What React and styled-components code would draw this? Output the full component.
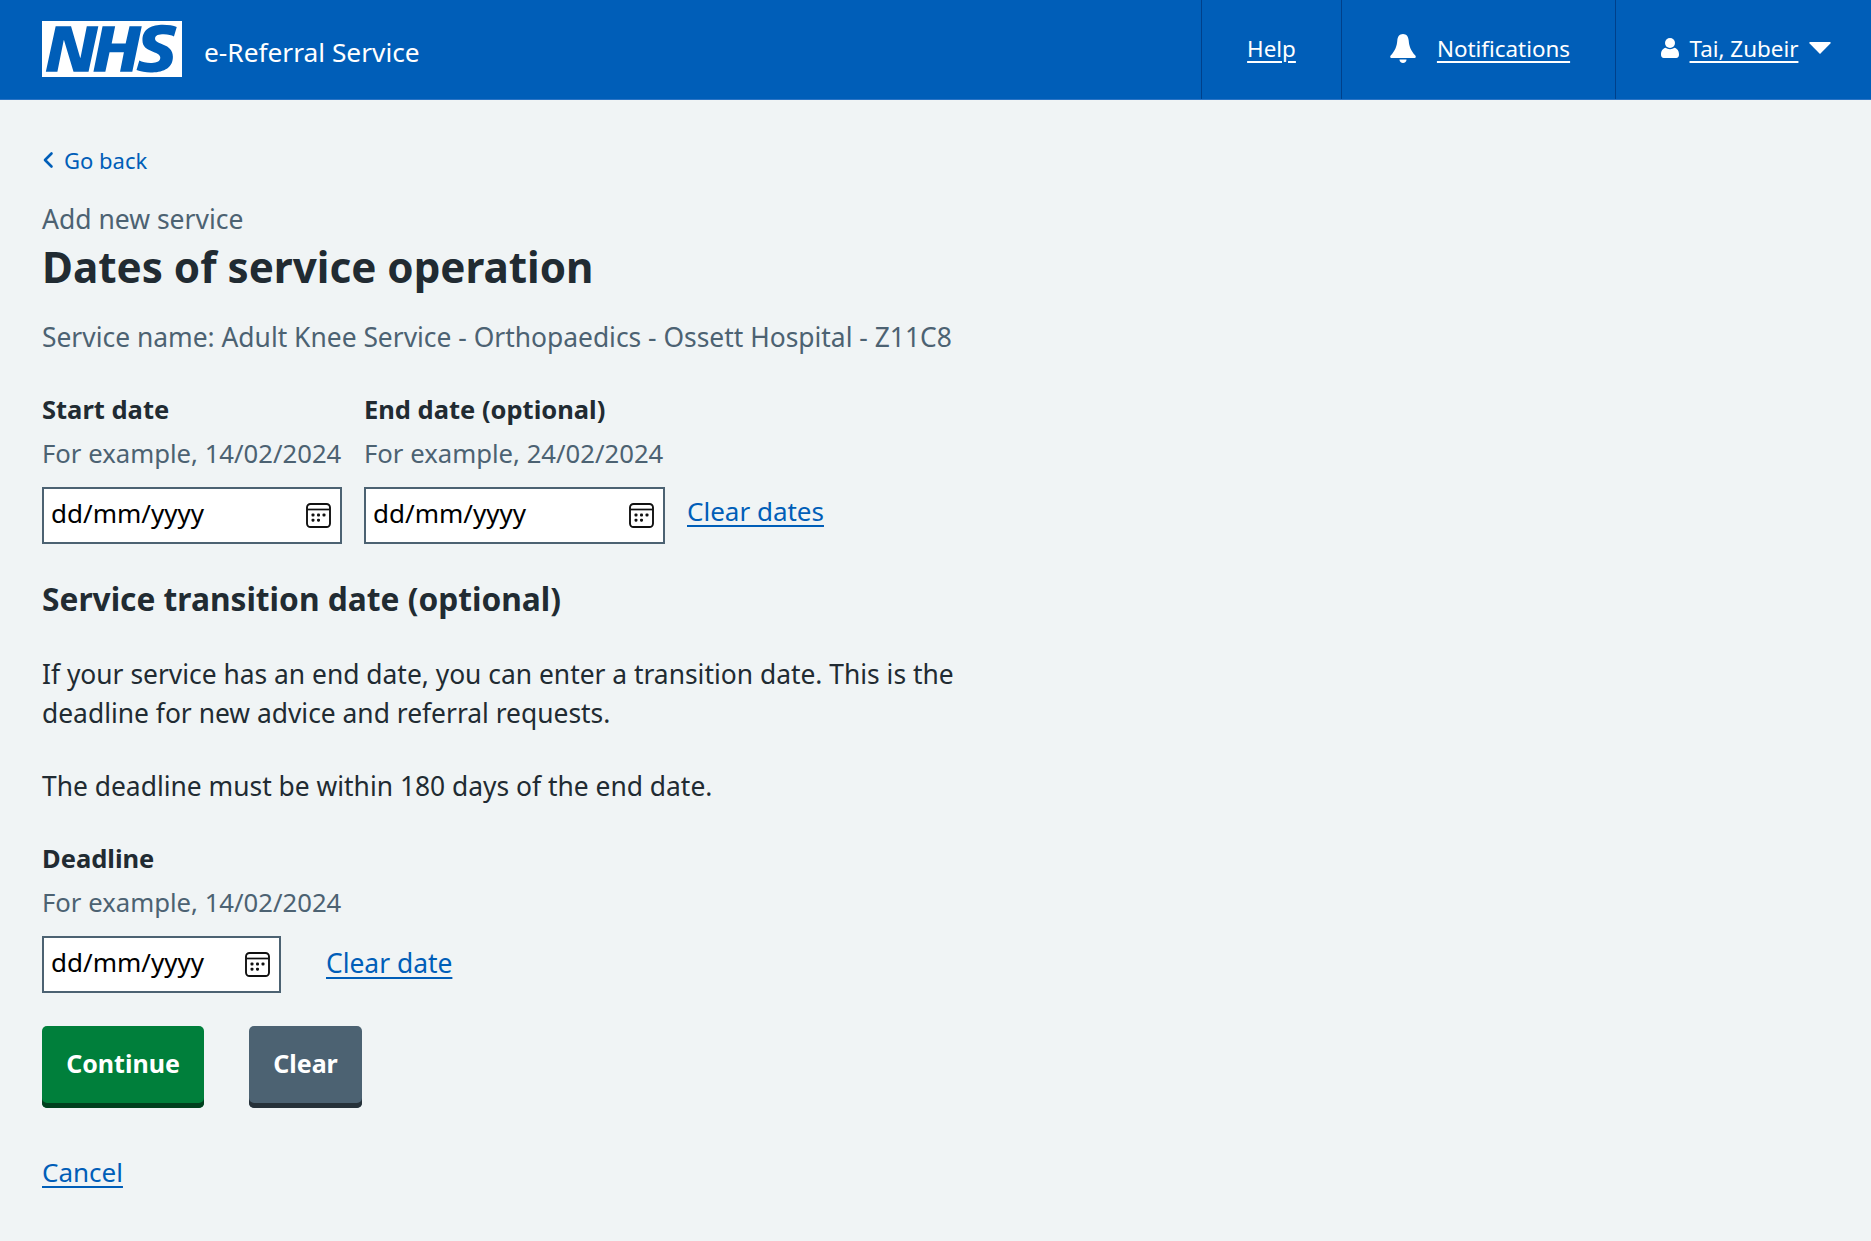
import React from 'react';
import styled, { createGlobalStyle } from 'styled-components';

const GlobalStyle = createGlobalStyle`
  html, body {
    margin: 0;
    padding: 0;
    background: #f0f4f5;
  }
  body {
    font-family: 'Noto Sans', 'Open Sans', Arial, sans-serif;
    color: #212b32;
  }
`

const Header = styled.header`
  display: flex;
  justify-content: space-between;
  height: 99px;
  background: #005eb8;
  border-bottom: 1px solid #2c74c4;
`

const Brand = styled.div`
  display: flex;
  align-items: center;
  gap: 22px;
  padding-left: 42px;
`

const Logo = styled.svg`
  display: block;
  width: 140px;
  height: 56px;
  margin-top: -2px;
`

const ServiceName = styled.span`
  color: white;
  font-size: 26.3px;
  margin-top: 5px;
`

const Nav = styled.nav`
  display: flex;
  height: 100%;
`

const NavItem = styled.div`
  display: flex;
  align-items: center;
  justify-content: center;
  width: ${props => props.width}px;
  gap: ${props => props.gap || 0}px;
  box-sizing: border-box;
  border-left: 1px solid #00408a;
  padding: 0 0 3px ${props => props.shift || 0}px;
`

const NavLink = styled.a`
  color: white;
  font-size: 22.4px;
  text-decoration: underline;
  text-underline-offset: 4px;
`

const Main = styled.main`
  padding: 45px 0 0 42px;
`

const BackLink = styled.a`
  display: flex;
  align-items: center;
  gap: 10px;
  color: #005eb8;
  font-size: 22px;
  line-height: 30px;
`

const Caption = styled.div`
  margin-top: 27px;
  font-size: 26.5px;
  line-height: 34px;
  color: #4c6272;
`

const Title = styled.h1`
  margin: 4px 0 0;
  font-size: 42.2px;
  line-height: 54px;
  font-weight: 700;
  color: #212b32;
`

const ServiceLine = styled.p`
  margin: 26px 0 0;
  font-size: 26.4px;
  line-height: 34px;
  color: #4c6272;
`

const DateRow = styled.div`
  display: flex;
  align-items: flex-end;
  gap: 22px;
  margin-top: ${props => props.top}px;
`

const DateGroup = styled.div`
  display: flex;
  flex-direction: column;
`

const Label = styled.label`
  font-size: 25.5px;
  line-height: 34px;
  font-weight: 700;
  color: #212b32;
`

const Hint = styled.span`
  margin-top: 11px;
  font-size: 25.7px;
  line-height: 34px;
  color: #4c6272;
`

const FieldRow = styled.div`
  display: flex;
  align-items: center;
  gap: 45px;
`

const DateField = styled.div`
  display: flex;
  align-items: center;
  justify-content: space-between;
  box-sizing: border-box;
  width: ${props => props.width}px;
  height: 57px;
  margin-top: 16px;
  padding: 0 9px 0 7px;
  background: white;
  border: 2px solid #4c6272;
  color: black;
  font-size: 26px;
`

const FieldText = styled.span`
  margin-top: -5px;
`

const BodyLink = styled.a`
  color: #005eb8;
  font-size: ${props => props.size || 26}px;
  line-height: 36px;
  text-decoration: underline;
  text-underline-offset: 4px;
  text-decoration-thickness: 2px;
`

const RowLink = styled(BodyLink)`
  margin-bottom: ${props => props.bottom}px;
`

const SubHeading = styled.h2`
  margin: 33px 0 0;
  font-size: 31.7px;
  line-height: 44px;
  font-weight: 700;
  color: #212b32;
`

const Para = styled.p`
  width: 960px;
  margin: ${props => props.top}px 0 0;
  font-size: 26.4px;
  line-height: 39px;
  color: #212b32;
`

const Actions = styled.div`
  display: flex;
  gap: 45px;
  margin-top: 33px;
`

const Button = styled.button`
  box-sizing: border-box;
  height: 82px;
  width: ${props => props.width}px;
  padding: 0 0 9px;
  border: none;
  border-radius: 5px;
  background: ${props => props.variant === 'grey' ? '#4c6272' : '#007f3b'};
  box-shadow: inset 0 -5px 0 ${props => props.variant === 'grey' ? '#263139' : '#00401e'};
  color: white;
  font-family: inherit;
  font-size: 25px;
  font-weight: 700;
`

const CancelRow = styled.div`
  margin-top: 46px;
  padding-bottom: 50px;
`

const CalendarIcon = () => (
  <svg width="25" height="25" viewBox="0 0 25 25" fill="none">
    <rect x="1" y="1" width="23" height="23" rx="3.5" stroke="#111" strokeWidth="1.9" />
    <path d="M1.500 6.500h22" stroke="#111" strokeWidth="1.700" />
    <g fill="#111">
      <rect x="5.500" y="10.500" width="3" height="3" rx="1.100" />
      <rect x="11" y="10.500" width="3" height="3" rx="1.100" />
      <rect x="16.500" y="10.500" width="3" height="3" rx="1.100" />
      <rect x="5.500" y="15.700" width="3" height="3" rx="1.100" />
      <rect x="11" y="15.700" width="3" height="3" rx="1.100" />
    </g>
  </svg>
)

const BellIcon = () => (
  <svg width="26" height="29" viewBox="0 0 26 29" fill="white">
    <path d="M13 0c3.600 0 5.400 2.800 5.700 6.500.4 5.500 2 10 6.600 15 .9 1 .5 2.500-1 2.500H1.700c-1.500 0-1.900-1.500-1-2.500 4.600-5 6.200-9.500 6.600-15C7.600 2.800 9.400 0 13 0z" />
    <path d="M9.500 25.500h7c0 2.200-1.500 3.500-3.500 3.500s-3.500-1.300-3.500-3.500z" />
  </svg>
)

const UserIcon = () => (
  <svg width="18" height="20" viewBox="0 0 18 20" fill="white">
    <ellipse cx="9" cy="5" rx="5" ry="5" />
    <path d="M0 16.500c0-4 2.200-6 4.500-6.700 2.600 1.800 6.400 1.800 9 0 2.300.7 4.500 2.700 4.500 6.700 0 2.300-1 3.500-2.800 3.500H2.800C1 20 0 18.800 0 16.500z" />
  </svg>
)

const Caret = () => (
  <svg width="22" height="12" viewBox="0 0 22 12" fill="white">
    <path d="M1 0h20a.8.8 0 0 1 .6 1.300L11 12 .4 1.300A.8.8 0 0 1 1 0z" />
  </svg>
)

const BackChevron = () => (
  <svg width="12" height="18" viewBox="0 0 12 18" fill="none">
    <path d="M9.500 2.500L3 9l6.500 6.500" stroke="#005eb8" strokeWidth="2.600" strokeLinecap="round" strokeLinejoin="round" />
  </svg>
)

const NhsLogo = () => (
  <Logo viewBox="0 0 40 16">
    <path fill="white" d="M0 0h40v16H0z" />
    <path fill="#005eb8" d="M3.900 1.500h4.400l2.600 9h.1l1.800-9h3.300l-2.800 13H9l-2.700-9h-.1l-1.800 9H1.100M17.300 1.500h3.600l-1 4.900h4L25 1.500h3.500l-2.700 13h-3.500l1.100-5.600h-4.100l-1.200 5.600h-3.400M37.700 4.400c-.7-.3-1.600-.6-2.900-.6-1.400 0-2.500.2-2.500 1.300 0 1.800 5.100 1.200 5.100 5.100 0 3.600-3.300 4.500-6.400 4.500-1.300 0-2.900-.3-4-.7l.8-2.700c.7.4 2.100.7 3.200.7s2.800-.2 2.800-1.500c0-2.100-5.100-1.300-5.100-5 0-3.400 2.900-4.400 5.800-4.400 1.600 0 3.100.2 4 .6" />
  </Logo>
)

const DateInput = ({ width }) => (
  <DateField width={width}>
    <FieldText>dd/mm/yyyy</FieldText>
    <CalendarIcon />
  </DateField>
)

const App = () => (
  <>
    <GlobalStyle />
    <Header>
      <Brand>
        <NhsLogo />
        <ServiceName>e-Referral Service</ServiceName>
      </Brand>
      <Nav>
        <NavItem width={140}>
          <NavLink>Help</NavLink>
        </NavItem>
        <NavItem width={274} gap={21} shift={3}>
          <BellIcon />
          <NavLink>Notifications</NavLink>
        </NavItem>
        <NavItem width={256} gap={11} shift={5}>
          <UserIcon />
          <NavLink>Tai, Zubeir</NavLink>
          <Caret />
        </NavItem>
      </Nav>
    </Header>
    <Main>
      <BackLink><BackChevron />Go back</BackLink>
      <Caption>Add new service</Caption>
      <Title>Dates of service operation</Title>
      <ServiceLine>Service name: Adult Knee Service - Orthopaedics - Ossett Hospital - Z11C8</ServiceLine>
      <DateRow top={38}>
        <DateGroup>
          <Label>Start date</Label>
          <Hint>For example, 14/02/2024</Hint>
          <DateInput width={300} />
        </DateGroup>
        <DateGroup>
          <Label>End date (optional)</Label>
          <Hint>For example, 24/02/2024</Hint>
          <DateInput width={301} />
        </DateGroup>
        <RowLink bottom={15}>Clear dates</RowLink>
      </DateRow>
      <SubHeading>Service transition date (optional)</SubHeading>
      <Para top={34}>If your service has an end date, you can enter a transition date. This is the deadline for new advice and referral requests.</Para>
      <Para top={34}>The deadline must be within 180 days of the end date.</Para>
      <DateRow top={35}>
        <DateGroup>
          <Label>Deadline</Label>
          <Hint>For example, 14/02/2024</Hint>
          <FieldRow>
            <DateInput width={239} />
            <RowLink size={26.4} bottom={-12}>Clear date</RowLink>
          </FieldRow>
        </DateGroup>
      </DateRow>
      <Actions>
        <Button width={162}>Continue</Button>
        <Button width={113} variant="grey">Clear</Button>
      </Actions>
      <CancelRow>
        <BodyLink>Cancel</BodyLink>
      </CancelRow>
    </Main>
  </>
)

export default App;
